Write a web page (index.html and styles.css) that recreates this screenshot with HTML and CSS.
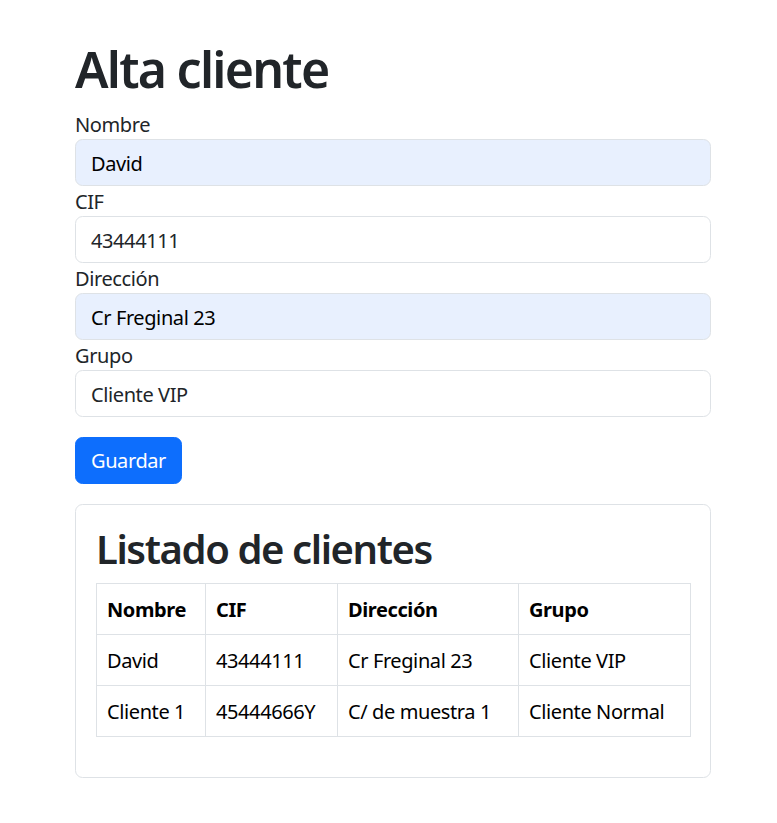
FILE: index.html
```html
<!DOCTYPE html>
<html lang="es">
<head>
<meta charset="utf-8">
<title>Alta cliente</title>
<link rel="stylesheet" href="styles.css">
</head>
<body>
<main class="container">
  <h1 class="title">Alta cliente</h1>
  <form class="form">
    <label class="label" for="nombre">Nombre</label>
    <input class="input input-filled" id="nombre" type="text" value="David">
    <label class="label" for="cif">CIF</label>
    <input class="input" id="cif" type="text" value="43444111">
    <label class="label" for="dir">Dirección</label>
    <input class="input input-filled" id="dir" type="text" value="Cr Freginal 23">
    <label class="label" for="grupo">Grupo</label>
    <input class="input" id="grupo" type="text" value="Cliente VIP">
    <div class="actions">
      <button class="btn" type="button">Guardar</button>
    </div>
  </form>
  <section class="card">
    <h2 class="card-title">Listado de clientes</h2>
    <table class="table">
      <colgroup>
        <col class="c1"><col class="c2"><col class="c3"><col class="c4">
      </colgroup>
      <thead>
        <tr><th>Nombre</th><th>CIF</th><th>Dirección</th><th>Grupo</th></tr>
      </thead>
      <tbody>
        <tr><td>David</td><td>43444111</td><td>Cr Freginal 23</td><td>Cliente VIP</td></tr>
        <tr><td>Cliente 1</td><td>45444666Y</td><td>C/ de muestra 1</td><td>Cliente Normal</td></tr>
      </tbody>
    </table>
  </section>
</main>
</body>
</html>
```

FILE: styles.css
```css
* { box-sizing: border-box; }
html, body { margin: 0; padding: 0; background: #fff; }
body {
  font-family: "Noto Sans", "Open Sans", sans-serif;
  font-size: 20px;
  line-height: 1.5;
  color: #212529;
  letter-spacing: -0.02em;
}
.container {
  width: 636px;
  margin: 0 0 0 75px;
  padding-top: 39px;
  padding-bottom: 40px;
}
.title {
  margin: 0 0 10px;
  font-size: 50px;
  font-weight: 600;
  line-height: 1.2;
  letter-spacing: -0.035em;
}
.form { display: flex; flex-direction: column; }
.label { display: block; height: 30px; line-height: 31px; }
.input {
  display: block;
  width: 100%;
  height: 47px;
  padding: 1px 15px 0;
  font: inherit;
  letter-spacing: inherit;
  color: #212529;
  background: #fff;
  border: 1px solid #dee2e6;
  border-radius: 7.5px;
  outline: none;
}
.input-filled { background: #e8f0fe; color: #000; }
.actions { margin-top: 20px; }
.btn {
  height: 47px;
  padding: 1px 15px 0;
  font: inherit;
  letter-spacing: inherit;
  color: #fff;
  background: #0d6efd;
  border: 1px solid #0d6efd;
  border-radius: 7.5px;
}
.card {
  margin-top: 20px;
  border: 1px solid #dee2e6;
  border-radius: 7.5px;
  padding: 20px;
}
.card-title {
  margin: 0 0 10px;
  font-size: 40px;
  font-weight: 600;
  line-height: 1.2;
  letter-spacing: -0.035em;
}
.table {
  width: 100%;
  border-collapse: collapse;
  margin-bottom: 20px;
  color: #000;
  table-layout: fixed;
}
.c1 { width: 109px; }
.c2 { width: 132px; }
.c3 { width: 181px; }
.c4 { width: 172px; }
.table th, .table td {
  border: 1px solid #dee2e6;
  padding: 11px 10px 9px;
  text-align: left;
  height: 51px;
  white-space: nowrap;
}
.table th { font-weight: 700; }
```
